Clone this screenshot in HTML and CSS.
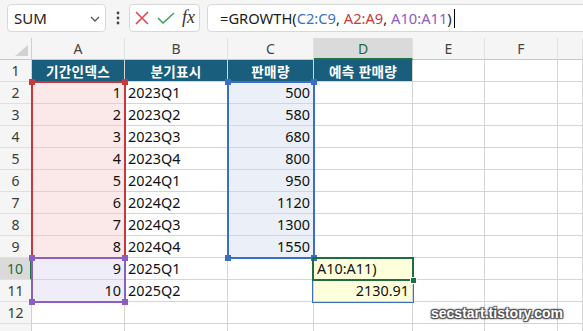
FILE: index.html
```html
<!DOCTYPE html>
<html lang="ko">
<head>
<meta charset="utf-8">
<title>GROWTH</title>
<link rel="stylesheet" href="styles.css">
</head>
<body>
<div class="app">
  <div class="toolbar">
    <div class="namebox">
      <span>SUM</span>
      <svg class="chev" width="10" height="6" viewBox="0 0 10 6"><path d="M1 1 L5 5 L9 1" fill="none" stroke="#555" stroke-width="1.3"/></svg>
    </div>
    <div class="dots">
      <svg width="4" height="14" viewBox="0 0 4 14"><circle cx="2" cy="2" r="1.4" fill="#444"/><circle cx="2" cy="7" r="1.4" fill="#444"/><circle cx="2" cy="12" r="1.4" fill="#444"/></svg>
    </div>
    <div class="btns">
      <svg class="ico-x" width="14" height="14" viewBox="0 0 14 14"><path d="M1 1 L13 13 M13 1 L1 13" stroke="#e0474c" stroke-width="1.6" fill="none"/></svg>
      <svg class="ico-ok" width="18" height="12" viewBox="0 0 18 12"><path d="M1 6 L6 11 L17 1" stroke="#3ea45c" stroke-width="1.6" fill="none"/></svg>
      <span class="fx">fx</span>
    </div>
    <div class="formula">
      <span>=GROWTH(</span><span class="f-blue">C2:C9</span><span>, </span><span class="f-red">A2:A9</span><span>, </span><span class="f-pur">A10:A11</span><span>)</span><span class="caret"></span>
    </div>
  </div>

  <div class="sheet">
    <div class="corner"><span class="tri"></span></div>
    <div class="ch">A</div><div class="ch">B</div><div class="ch">C</div><div class="ch sel">D</div><div class="ch">E</div><div class="ch">F</div><div class="ch"></div>

    <div class="rh">1</div><div class="c th">기간인덱스</div><div class="c th">분기표시</div><div class="c th">판매량</div><div class="c th">예측 판매량</div><div class="c"></div><div class="c"></div><div class="c"></div>

    <div class="rh">2</div><div class="c n pk">1</div><div class="c">2023Q1</div><div class="c n bf">500</div><div class="c"></div><div class="c"></div><div class="c"></div><div class="c"></div>
    <div class="rh">3</div><div class="c n pk">2</div><div class="c">2023Q2</div><div class="c n bf">580</div><div class="c"></div><div class="c"></div><div class="c"></div><div class="c"></div>
    <div class="rh">4</div><div class="c n pk">3</div><div class="c">2023Q3</div><div class="c n bf">680</div><div class="c"></div><div class="c"></div><div class="c"></div><div class="c"></div>
    <div class="rh">5</div><div class="c n pk">4</div><div class="c">2023Q4</div><div class="c n bf">800</div><div class="c"></div><div class="c"></div><div class="c"></div><div class="c"></div>
    <div class="rh">6</div><div class="c n pk">5</div><div class="c">2024Q1</div><div class="c n bf">950</div><div class="c"></div><div class="c"></div><div class="c"></div><div class="c"></div>
    <div class="rh">7</div><div class="c n pk">6</div><div class="c">2024Q2</div><div class="c n bf">1120</div><div class="c"></div><div class="c"></div><div class="c"></div><div class="c"></div>
    <div class="rh">8</div><div class="c n pk">7</div><div class="c">2024Q3</div><div class="c n bf">1300</div><div class="c"></div><div class="c"></div><div class="c"></div><div class="c"></div>
    <div class="rh">9</div><div class="c n pk">8</div><div class="c">2024Q4</div><div class="c n bf">1550</div><div class="c"></div><div class="c"></div><div class="c"></div><div class="c"></div>

    <div class="rh sel">10</div><div class="c n pu">9</div><div class="c">2025Q1</div><div class="c"></div><div class="c ye">A10:A11)</div><div class="c"></div><div class="c"></div><div class="c"></div>
    <div class="rh">11</div><div class="c n pu">10</div><div class="c">2025Q2</div><div class="c"></div><div class="c n ye">2130.91</div><div class="c"></div><div class="c"></div><div class="c"></div>
    <div class="rh">12</div><div class="c"></div><div class="c"></div><div class="c"></div><div class="c"></div><div class="c"></div><div class="c"></div><div class="c"></div>
    <div class="rh"></div><div class="c"></div><div class="c"></div><div class="c"></div><div class="c"></div><div class="c"></div><div class="c"></div><div class="c"></div>

    <div class="rng rng-red"><i class="hd tl"></i><i class="hd tr"></i></div>
    <div class="rng rng-blue"><i class="hd tl"></i><i class="hd tr"></i><i class="hd bl"></i><i class="hd br"></i></div>
    <div class="rng rng-pur"><i class="hd tl"></i><i class="hd tr"></i><i class="hd bl"></i><i class="hd br"></i></div>
    <div class="rng rng-spill"></div>
    <div class="rng rng-act"><i class="fill"></i></div>
  </div>

  <div class="watermark">secstart.tistory.com</div>
</div>
</body>
</html>
```
FILE: styles.css
```css
* { box-sizing: border-box; }
html, body { margin: 0; padding: 0; background: #fff; }
body { font-family: "Noto Sans", "Noto Sans CJK KR", sans-serif; color: #1a1a1a; }

.app { width: 583px; height: 331px; overflow: hidden; position: relative; background: #fff; }

/* formula bar */
.toolbar { height: 38px; background: #f5f5f5; display: flex; padding: 4px 0 6px 7px; }
.namebox { width: 99px; background: #fff; border: 1px solid #d8d8d8; border-radius: 4px;
  display: flex; align-items: center; justify-content: space-between; padding: 0 5px 0 6px;
  font-size: 15px; color: #222; }
.chev { margin-top: 1px; }
.dots { width: 23px; display: flex; align-items: center; justify-content: center; }
.btns { width: 71px; background: #fff; border: 1px solid #d8d8d8; border-radius: 4px;
  display: flex; align-items: center; padding-left: 5px; }
.ico-x { margin-right: 8px; }
.ico-ok { margin-right: 7px; }
.fx { font-family: "Liberation Serif", serif; font-style: italic; font-size: 18px; color: #333; line-height: 1; margin-top: -2px; }
.formula { flex: 1; margin-left: 7px; margin-right: -8px; background: #fff; border: 1px solid #d8d8d8;
  border-radius: 4px; display: flex; align-items: center; padding-left: 12px; font-size: 14.7px;
  color: #1a1a1a; white-space: pre; }
.f-blue { color: #3a72c8; }
.f-red { color: #c9383d; }
.f-pur { color: #8c5dc2; }
.caret { width: 1px; height: 19px; background: #000; margin-left: 2px; }

/* sheet grid */
.sheet { position: relative; display: grid;
  grid-template-columns: 32px 93px 103px 86px 99px 72px 73px 1fr;
  grid-auto-rows: 22px; }

.corner { background: #f5f5f5; border-right: 1px solid #d0d0d0; border-bottom: 1px solid #c8c8c8; position: relative; }
.tri { position: absolute; right: 3px; bottom: 3px; width: 0; height: 0;
  border-left: 13px solid transparent; border-bottom: 11px solid #d2d2d2; }

.ch { background: #f5f5f5; border-right: 1px solid #e0e0e0; border-bottom: 1px solid #c8c8c8;
  display: flex; align-items: center; justify-content: center; font-size: 14px; color: #444; }
.ch.sel { background: #dadada; border-bottom: 2px solid #217346; color: #1e6b3f; }

.rh { background: #f5f5f5; border-right: 1px solid #d0d0d0; border-bottom: 1px solid #e0e0e0;
  display: flex; align-items: center; justify-content: center; font-size: 14px; color: #3a3a3a; }
.rh.sel { background: #dadada; border-right: 2px solid #217346; color: #1e6b3f; }

.c { border-right: 1px solid #d5d5d5; border-bottom: 1px solid #d5d5d5;
  display: flex; align-items: center; padding: 0 3px 0 3px; font-size: 14.4px; color: #111;
  white-space: nowrap; overflow: hidden; }
.c.n { justify-content: flex-end; }
.c.th { background: #195f7d; color: #fff; justify-content: center; font-weight: 700; font-size: 13.6px;
  font-family: "Noto Sans CJK KR", "Noto Sans", sans-serif; letter-spacing: 0.3px; }
.c.pk { background: #fbe9e9; }
.c.bf { background: #eaeff8; }
.c.pu { background: #efedf7; }
.c.ye { background: #ffffdb; }

/* range highlights drawn over the grid */
.rng { position: absolute; pointer-events: none; border: 2px solid; }
.rng-red { color: #c4393d; border-color: #c4393d; left: 31px; top: 43px; width: 95px; height: 178px; }
.rng-blue { color: #3b6fc6; border-color: #3b6fc6; left: 227px; top: 43px; width: 88px; height: 178px; }
.rng-pur { color: #8b5ec1; border-color: #8b5ec1; left: 31px; top: 219px; width: 95px; height: 46px; }
.rng-spill { border: 1px solid #3b6fc6; left: 312px; top: 219px; width: 102px; height: 46px; }
.rng-act { border-color: #1f6e42; left: 312px; top: 219px; width: 102px; height: 24px; }
.hd { position: absolute; width: 6px; height: 6px; background: currentColor; }
.tl { left: -4px; top: -4px; }
.tr { right: -4px; top: -4px; }
.bl { left: -4px; bottom: -4px; }
.br { right: -4px; bottom: -4px; }
.fill { position: absolute; right: -5px; bottom: -5px; width: 7px; height: 7px; background: #1f6e42; border: 1px solid #fff; }

.watermark { position: absolute; right: 20px; bottom: 10px; font-family: "Liberation Sans", sans-serif;
  font-weight: 700; font-size: 14px; line-height: 16px; color: #fff;
  text-shadow: 1px 1px 1px #4a4a4a, -1px -1px 1px #4a4a4a, 1px -1px 1px #4a4a4a, -1px 1px 1px #4a4a4a, 0 0 3px #555; }
```
